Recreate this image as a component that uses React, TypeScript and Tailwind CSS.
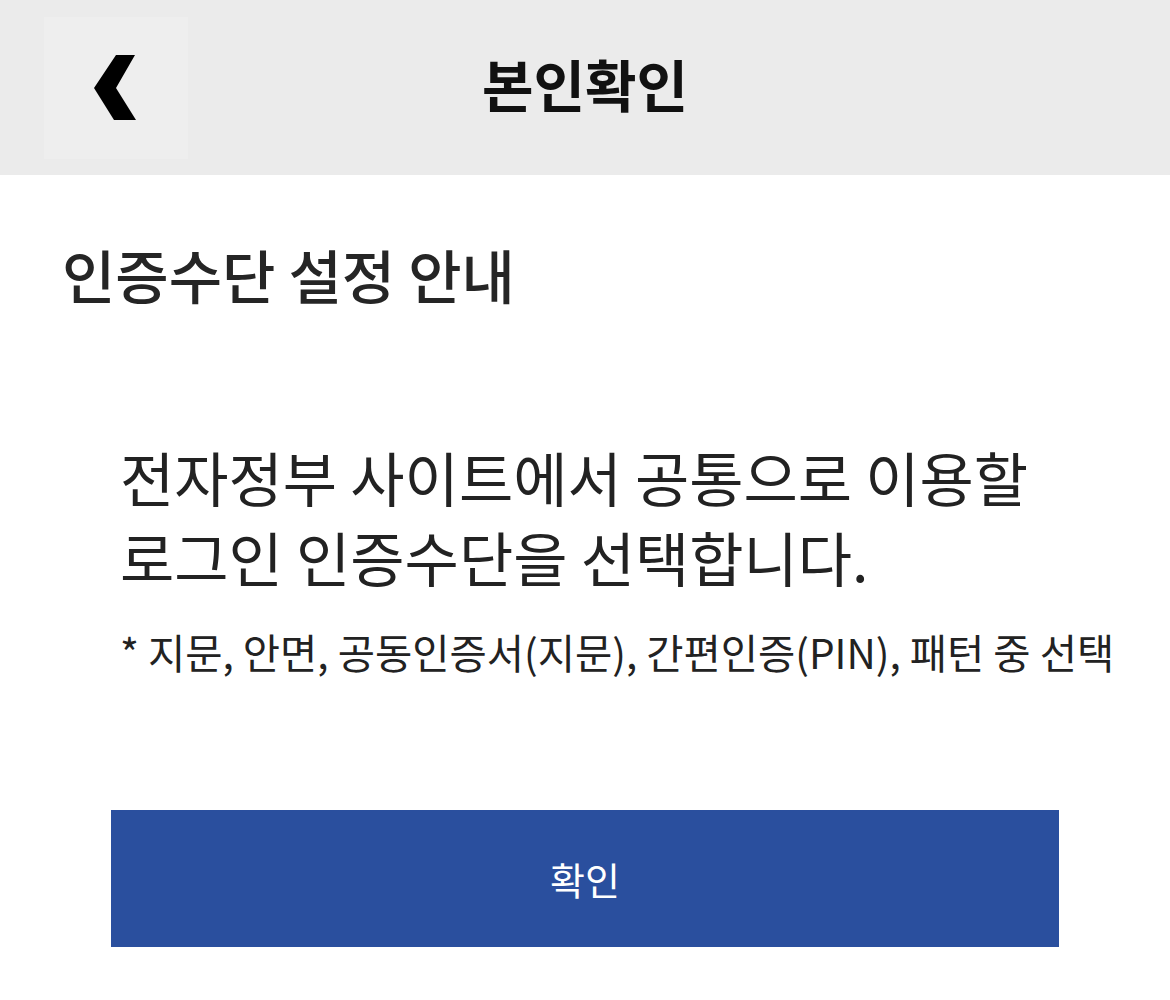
import React from 'react';

const font = { fontFamily: '"Noto Sans CJK KR", "Noto Sans", sans-serif' };

export default function App() {
  return (
    <div className="w-[1170px] h-[1000px] bg-white overflow-hidden" style={font}>
      {/* header */}
      <div className="h-[175px] bg-[#ebebeb] flex items-center relative">
        <button className="ml-[44px] w-[144px] h-[142px] bg-[#eeeeee] flex items-center justify-center">
          <svg width="44" height="66" viewBox="0 0 44 66">
            <path d="M41 0 L22 0 L0 33 L20 65 L42 65 L22 33 Z" fill="#000" />
          </svg>
        </button>
        <div className="absolute left-0 right-0 top-0 h-[175px] flex items-center justify-center pointer-events-none">
          <span className="text-[56px] font-bold text-[#111] -mt-[10px]">본인확인</span>
        </div>
      </div>

      <div className="pt-[59px] pl-[62px]">
        <h2 className="text-[58px] font-medium text-[#252525] leading-[80px]">인증수단 설정 안내</h2>
      </div>

      <div className="pt-[123px] pl-[120px]">
        <p className="text-[59px] text-[#222] leading-[80px]">
          전자정부 사이트에서 공통으로 이용할
          <br />
          로그인 인증수단을 선택합니다.
        </p>
        <p className="mt-[27px] text-[40.5px] text-[#222] leading-[56px]">
          * 지문, 안면, 공동인증서(지문), 간편인증(PIN), 패턴 중 선택
        </p>
      </div>

      <div className="pt-[130px] px-[111px]">
        <button className="w-[948px] h-[137px] bg-[#2a4f9e] text-white text-[38px] flex items-center justify-center">
          확인
        </button>
      </div>
    </div>
  );
}
